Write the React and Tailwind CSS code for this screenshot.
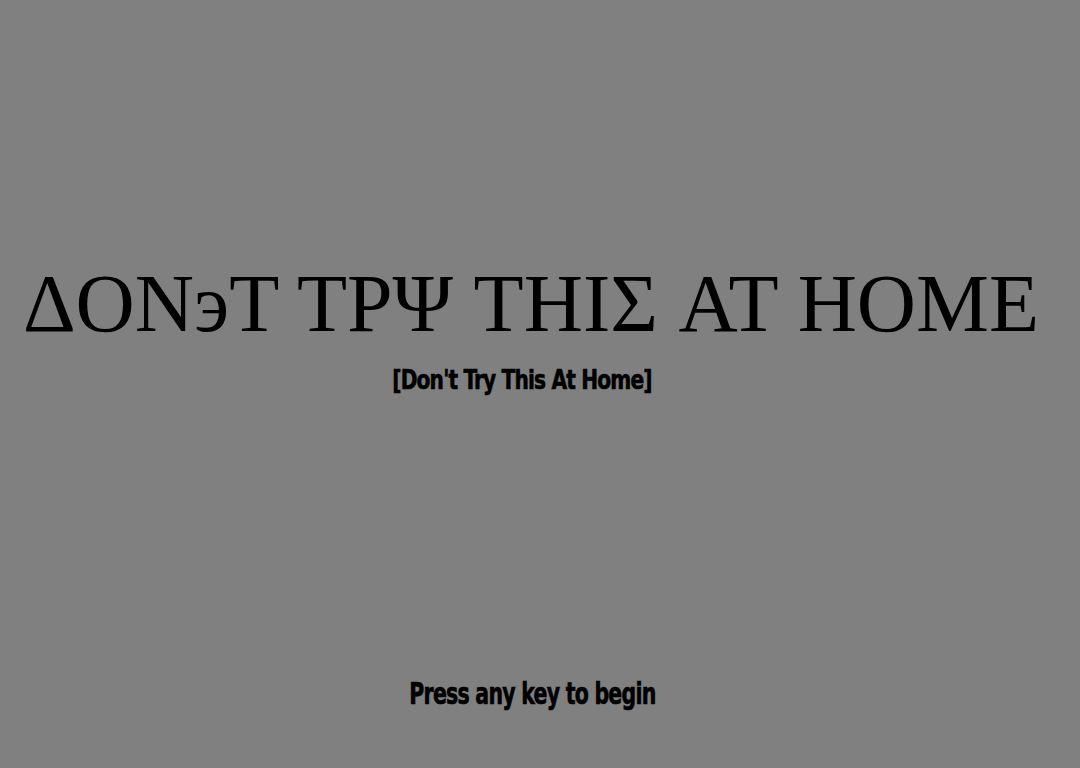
export default function App() {
  return (
    <div className="min-h-screen w-full bg-[#808080] flex flex-col items-center text-black">
      <h1 className="pt-[258px] pr-[18px] font-['Liberation_Serif',serif] text-[82px] leading-[92px] font-normal whitespace-nowrap">
        ΔONэT TPΨ THIΣ AT HOME
      </h1>
      <p className="mt-[15px] pr-[44px] font-['DejaVu_Sans_Condensed','Liberation_Sans_Narrow',sans-serif] text-[27px] leading-[30px] font-bold tracking-[-1px] scale-x-[0.83] [-webkit-text-stroke:0.6px_black] whitespace-nowrap">
        [Don't Try This At Home]
      </p>
      <p className="mt-[283px] pr-[20px] font-['DejaVu_Sans_Condensed','Liberation_Sans_Narrow',sans-serif] text-[30px] leading-[32px] font-bold tracking-[-1px] scale-x-[0.76] [-webkit-text-stroke:0.6px_black] whitespace-nowrap">
        Press any key to begin
      </p>
    </div>
  );
}
